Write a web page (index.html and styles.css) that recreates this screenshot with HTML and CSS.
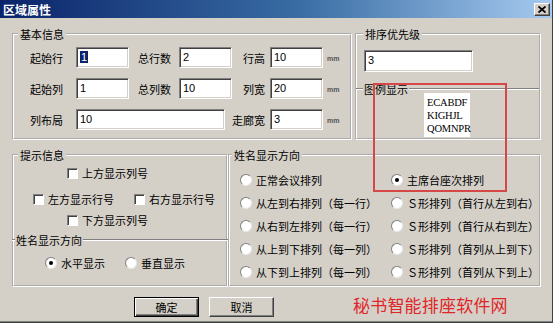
FILE: index.html
```html
<!DOCTYPE html>
<html lang="zh-CN">
<head>
    <meta charset="UTF-8">
    <title>区域属性</title>
    <link rel="stylesheet" href="styles.css">
</head>
<body>
<div class="window">
    <!-- 标题栏 -->
    <div class="titlebar">
        <span class="title">区域属性</span>
        <span class="close">
            <svg width="8" height="7" viewBox="0 0 8 7"><path d="M0.5 0.5 L7.5 6.5 M7.5 0.5 L0.5 6.5" stroke="#000" stroke-width="1.8" fill="none"/></svg>
        </span>
    </div>

    <div class="dialog-body">
        <div class="top-row">
            <fieldset class="group basic">
                <legend>基本信息</legend>
                <div class="basic-grid">
                    <label>起始行</label><span class="input"><span class="hl">1</span></span>
                    <label class="mid">总行数</label><span class="input">2</span>
                    <label class="right">行高</label><span class="input">10</span><span class="unit">mm</span>

                    <label>起始列</label><span class="input">1</span>
                    <label class="mid">总列数</label><span class="input">10</span>
                    <label class="right">列宽</label><span class="input">20</span><span class="unit">mm</span>

                    <label>列布局</label><span class="input wide">10</span>
                    <label class="right">走廊宽</label><span class="input">3</span><span class="unit">mm</span>
                </div>
            </fieldset>

            <fieldset class="group sort">
                <legend>排序优先级</legend>
                <span class="input sort-input">3</span>
                <div class="divider">图例显示</div>
                <div class="preview">ECABDF<br>KIGHJL<br>QOMNPR</div>
            </fieldset>
        </div>

        <div class="bottom-row">
            <fieldset class="group hints">
                <legend>提示信息</legend>
                <div class="check-row row-top">
                    <span class="check"><span class="box"></span>上方显示列号</span>
                </div>
                <div class="check-row row-side">
                    <span class="check"><span class="box"></span>左方显示行号</span>
                    <span class="check"><span class="box"></span>右方显示行号</span>
                </div>
                <div class="check-row row-bottom">
                    <span class="check"><span class="box"></span>下方显示列号</span>
                </div>
                <div class="divider hints-divider">姓名显示方向</div>
                <div class="check-row row-radio">
                    <span class="radio"><span class="dot on"></span>水平显示</span>
                    <span class="radio"><span class="dot"></span>垂直显示</span>
                </div>
            </fieldset>

            <fieldset class="group order">
                <legend>姓名显示方向</legend>
                <div class="order-grid">
                    <span class="radio"><span class="dot"></span>正常会议排列</span>
                    <span class="radio"><span class="dot on"></span>主席台座次排列</span>
                    <span class="radio"><span class="dot"></span>从左到右排列（每一行）</span>
                    <span class="radio"><span class="dot"></span>Ｓ形排列（首行从左到右）</span>
                    <span class="radio"><span class="dot"></span>从右到左排列（每一行）</span>
                    <span class="radio"><span class="dot"></span>Ｓ形排列（首行从右到左）</span>
                    <span class="radio"><span class="dot"></span>从上到下排列（每一列）</span>
                    <span class="radio"><span class="dot"></span>Ｓ形排列（首列从上到下）</span>
                    <span class="radio"><span class="dot"></span>从下到上排列（每一列）</span>
                    <span class="radio"><span class="dot"></span>Ｓ形排列（首列从下到上）</span>
                </div>
            </fieldset>
        </div>

        <div class="buttons">
            <span class="btn default">确定</span>
            <span class="btn">取消</span>
            <span class="brand">秘书智能排座软件网</span>
        </div>
    </div>

    <!-- 红色标注框 -->
    <div class="highlight"></div>
</div>
</body>
</html>
```

FILE: styles.css
```css
/* 基础 */
* {
    box-sizing: border-box;
}
body {
    margin: 0;
    background: #d4d0c8;
}

.window {
    position: relative;
    width: 553px;
    height: 323px;
    background: #d4d0c8;
    border-right: 1px solid #404040;
    border-bottom: 1px solid #404040;
    box-shadow: inset 0 -1px 0 #808080;
    overflow: hidden;
    font: 11px/14px "Noto Sans CJK SC", sans-serif;
    color: #000;
}

/* 标题栏 */
.titlebar {
    height: 18px;
    display: flex;
    align-items: center;
    justify-content: space-between;
    padding: 1px 2px 0 3px;
    background: linear-gradient(to right, #0a246a, #3a6ea5 55%, #a6caf0);
}
.title {
    color: #fff;
    font-weight: bold;
    font-size: 12px;
    line-height: 16px;
}
.close {
    width: 16px;
    height: 13px;
    display: flex;
    align-items: center;
    justify-content: center;
    background: #d4d0c8;
    border: 1px solid;
    border-color: #fff #404040 #404040 #fff;
    box-shadow: inset -1px -1px 0 #808080;
}

.dialog-body {
    padding: 9px 0 0 12px;
}

/* 分组框 */
.group {
    margin: 0;
    padding: 0;
    min-width: 0;
    border: 2px groove #fff;
}
.group legend {
    padding: 0 2px;
    margin-left: 4px;
    line-height: 14px;
}

.top-row {
    display: flex;
    gap: 3px;
}
.basic {
    width: 340px;
    height: 113px;
}
.sort {
    width: 186px;
    height: 113px;
}
.sort legend {
    margin-left: 6px;
}

/* 输入框 */
.input {
    display: block;
    width: 53px;
    height: 21px;
    padding: 2px 0 0 3px;
    background: #fff;
    border: 1px solid;
    border-color: #808080 #fff #fff #808080;
    box-shadow: inset 1px 1px 0 #404040, inset -1px -1px 0 #d4d0c8;
    font: 11px/14px "Liberation Sans", sans-serif;
}
.hl {
    background: #0a246a;
    color: #fff;
    padding: 0 1px;
}

.basic-grid {
    display: grid;
    grid-template-columns: 46px 53px 50px 53px 38px 53px auto;
    grid-auto-rows: 21px;
    row-gap: 10px;
    align-items: center;
    margin: 6px 0 0 16px;
}
.basic-grid .mid {
    padding-left: 9px;
}
.basic-grid .right {
    text-align: right;
    padding-right: 5px;
}
.basic-grid .wide {
    grid-column: 2 / span 3;
    width: 149px;
}
.unit {
    padding: 3px 0 0 4px;
    font: bold 7px/10px "Liberation Sans", sans-serif;
    color: #555;
}

.sort-input {
    width: 109px;
    height: 22px;
    margin: 9px 0 0 7px;
}

/* 分隔线标题 */
.divider {
    display: flex;
    align-items: center;
    line-height: 12px;
}
.divider::before,
.divider::after {
    content: "";
    height: 0;
    border-top: 1px solid #808080;
    border-bottom: 1px solid #fff;
}
.divider::before {
    width: 7px;
    margin-right: 1px;
}
.divider::after {
    flex: 1;
    margin-left: 1px;
}
.sort .divider {
    margin: 11px 0 0 -1px;
}

.preview {
    width: 46px;
    height: 44px;
    margin: -2px 0 0 67px;
    padding: 3px 0 0 3px;
    background: #fff;
    font: 10.5px/13px "Liberation Serif", serif;
    letter-spacing: -0.2px;
}

/* 下半部分 */
.bottom-row {
    display: flex;
    margin-top: 8px;
}
.hints {
    width: 216px;
    height: 139px;
}
.order {
    width: 313px;
    height: 139px;
}
.order legend {
    margin-left: 2px;
}

.check-row {
    display: flex;
    align-items: center;
    height: 14px;
}
.check,
.radio {
    display: flex;
    align-items: center;
    gap: 4px;
    white-space: nowrap;
}
.box {
    width: 11px;
    height: 11px;
    background: #fff;
    border: 1px solid;
    border-color: #808080 #fff #fff #808080;
    box-shadow: inset 1px 1px 0 #404040;
}
.row-top {
    margin-top: 4px;
    padding-left: 53px;
}
.row-side {
    margin-top: 12px;
    padding-left: 19px;
    gap: 20px;
}
.row-bottom {
    margin-top: 7px;
    padding-left: 53px;
}
.hints-divider {
    margin: 7px -2px 0;
}
.hints-divider::before {
    width: 3px;
}
.row-radio {
    margin-top: 10px;
    padding-left: 31px;
    gap: 20px;
}

.dot {
    position: relative;
    width: 12px;
    height: 12px;
    border-radius: 50%;
    background: #fff;
    border: 1px solid;
    border-color: #808080 #e8e8e8 #e8e8e8 #808080;
}
.dot.on::after {
    content: "";
    position: absolute;
    left: 3px;
    top: 3px;
    width: 4px;
    height: 4px;
    border-radius: 50%;
    background: #000;
}

.order-grid {
    display: grid;
    grid-template-columns: 151px auto;
    grid-auto-rows: 14px;
    row-gap: 9px;
    margin: 11px 0 0 10px;
}

/* 按钮行 */
.buttons {
    display: flex;
    align-items: center;
    margin-top: 10px;
    padding-left: 122px;
}
.btn {
    width: 65px;
    height: 20px;
    text-align: center;
    line-height: 18px;
    background: #d4d0c8;
    border: 1px solid;
    border-color: #fff #404040 #404040 #fff;
    box-shadow: inset -1px -1px 0 #808080;
}
.btn + .btn {
    margin-left: 10px;
}
.btn.default {
    border: 1px solid #000;
    box-shadow: inset 1px 1px 0 #fff, inset -1px -1px 0 #404040, inset -2px -2px 0 #808080;
}
.brand {
    margin: -4px 0 0 79px;
    font-size: 17px;
    line-height: 20px;
    color: #e0262a;
    letter-spacing: 0.2px;
}

/* 红色标注 */
.highlight {
    position: absolute;
    left: 373px;
    top: 83px;
    width: 134px;
    height: 109px;
    border: 2px solid #d64848;
}
```
